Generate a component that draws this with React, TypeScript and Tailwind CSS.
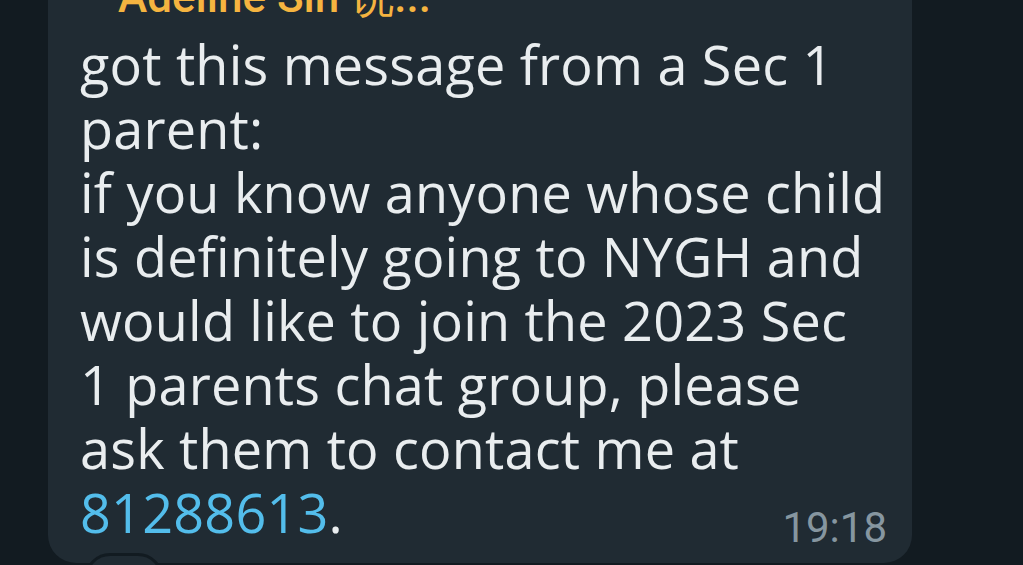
import React from 'react';

const lines = [
  'got this message from a Sec 1',
  'parent:',
  'if you know anyone whose child',
  'is definitely going to NYGH and',
  'would like to join the 2023 Sec',
  '1 parents chat group, please',
  'ask them to contact me at',
];

const App: React.FC = () => {
  return (
    <div className="relative h-[565px] w-full overflow-hidden bg-[#121b21] font-['Roboto',sans-serif]">
      <div className="ml-[48px] -mt-[40px] w-[864px] rounded-b-[28px] bg-[#202b33] pt-[12px] pb-[11px] pl-[32px] pr-[25px]">
        {/* sender name, mostly scrolled off the top */}
        <div className="whitespace-nowrap pl-[38px] text-[44px] font-medium leading-[50px] text-[#f5b440]">
          Adeline Sin 说...
        </div>
        <p className="mt-[10px] font-['Open_Sans',sans-serif] text-[54px] leading-[64px] tracking-[0.2px] text-[#e9edef]">
          {lines.map((l) => (
            <span key={l} className="block whitespace-nowrap">
              {l}
            </span>
          ))}
          <span className="block whitespace-nowrap">
            <span className="text-[#53bdeb]">81288613</span>.
          </span>
        </p>
        <div className="-mt-[40px] flex justify-end">
          <span className="text-[42px] leading-[48px] text-[#8696a0]">19:18</span>
        </div>
      </div>
      {/* reaction pill peeking under the bubble */}
      <div className="absolute left-[85px] top-[553px] h-[50px] w-[78px] rounded-full border-[3px] border-[#121b21] bg-[#202b33]" />
    </div>
  );
};

export default App;
